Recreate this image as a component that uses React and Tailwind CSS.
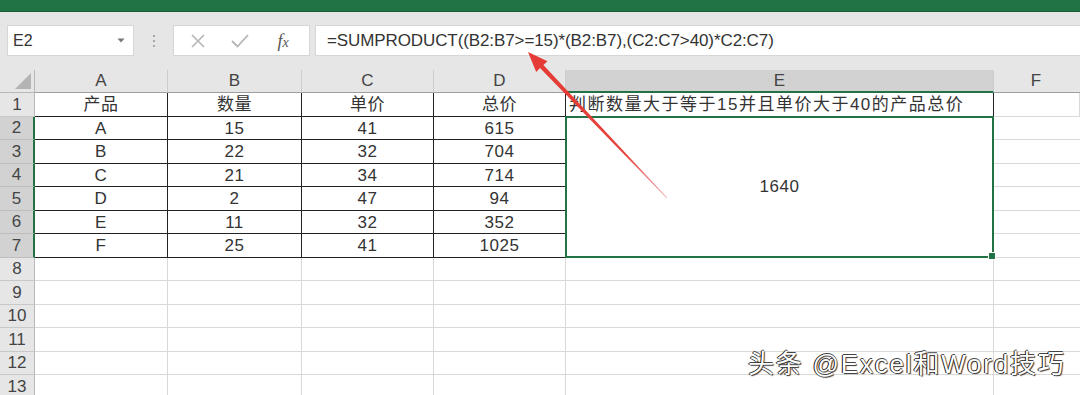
import React from "react";

const FONT = { fontFamily: '"Liberation Sans", "Noto Sans CJK SC", sans-serif' };

const data = [
  ["A", "15", "41", "615"],
  ["B", "22", "32", "704"],
  ["C", "21", "34", "714"],
  ["D", "2", "47", "94"],
  ["E", "11", "32", "352"],
  ["F", "25", "41", "1025"],
];

function RowHead({ n, selected }) {
  return (
    <div
      className={
        "flex items-center justify-center text-[17px] text-[#444] border-b border-[#c8c8c8] " +
        (selected
          ? "bg-[#d2d2d2] border-r-2 border-r-[#217346]"
          : "bg-[#e6e6e6] border-r border-r-[#b8b8b8]")
      }
    >
      {n}
    </div>
  );
}

function TCell({ children }) {
  return (
    <div className="flex items-center justify-center pt-[1px] text-[17px] tracking-[0.5px] text-[#333] border-r border-b border-[#222] bg-white leading-none">
      {children}
    </div>
  );
}

function GCell() {
  return <div className="border-r border-b border-[#d9d9d9] bg-white" />;
}

export default function App() {
  return (
    <div className="relative w-[1080px] h-[395px] overflow-hidden bg-white" style={FONT}>
      {/* ribbon strip */}
      <div className="h-[12px] bg-[#217346] border-b border-[#1a5a37]" />

      {/* formula bar area */}
      <div className="h-[58px] bg-[#e6e6e6] flex items-start pt-[13px] pl-[7px]">
        <div className="w-[127px] h-[31px] bg-white border border-[#d6d6d6] flex items-center justify-between pl-[5px] pr-[8px]">
          <span className="text-[16px] text-[#333]">E2</span>
          <svg width="8" height="5" viewBox="0 0 8 5">
            <path d="M0.5 0.5 L7.5 0.5 L4 4.5 Z" fill="#777" />
          </svg>
        </div>
        <div className="w-[39px] h-[31px] flex items-center justify-center">
          <svg width="4" height="16" viewBox="0 0 4 16">
            <circle cx="2" cy="3" r="1.1" fill="#9a9a9a" />
            <circle cx="2" cy="8" r="1.1" fill="#9a9a9a" />
            <circle cx="2" cy="13" r="1.1" fill="#9a9a9a" />
          </svg>
        </div>
        <div className="w-[137px] h-[31px] bg-white border border-[#d6d6d6] flex items-center">
          <div className="w-[45px] flex justify-center pl-[2px]">
            <svg width="14" height="14" viewBox="0 0 14 14">
              <path d="M1 1 L13 13 M13 1 L1 13" stroke="#b5b5b5" strokeWidth="1.6" />
            </svg>
          </div>
          <div className="w-[42px] flex justify-center">
            <svg width="18" height="14" viewBox="0 0 18 14">
              <path d="M1 7 L6.5 12.5 L17 1" stroke="#b5b5b5" strokeWidth="1.8" fill="none" />
            </svg>
          </div>
          <div className="flex-1 flex justify-center pr-[4px]">
            <span
              className="italic text-[18px] text-[#555] leading-none"
              style={{ fontFamily: '"Liberation Serif", "DejaVu Serif", serif' }}
            >
              f<span className="text-[14px]">x</span>
            </span>
          </div>
        </div>
        <div className="ml-[5px] flex-1 h-[31px] bg-white border border-[#d6d6d6] border-r-0 flex items-center pl-[11px]">
          <span className="text-[17px] text-[#333] whitespace-nowrap tracking-[-0.1px]">
            =SUMPRODUCT((B2:B7&gt;=15)*(B2:B7),(C2:C7&gt;40)*C2:C7)
          </span>
        </div>
      </div>

      {/* sheet grid */}
      <div className="grid grid-cols-[35px_133px_134px_132px_132px_428px_1fr] grid-rows-[23px_repeat(13,23.5px)]">
        {/* header row */}
        <div className="bg-[#e6e6e6] border-r border-b border-[#b8b8b8] relative">
          <svg className="absolute right-[3px] bottom-[3px]" width="16" height="16" viewBox="0 0 16 16">
            <path d="M16 0 L16 16 L0 16 Z" fill="#b4b4b4" />
          </svg>
        </div>
        {["A", "B", "C", "D"].map((c) => (
          <div
            key={c}
            className="bg-[#e6e6e6] border-r border-r-[#cdcdcd] border-b border-b-[#9e9e9e] flex items-center justify-center text-[17px] text-[#444]"
          >
            {c}
          </div>
        ))}
        <div className="bg-[#d2d2d2] border-r border-r-[#cdcdcd] border-b-2 border-b-[#217346] flex items-center justify-center text-[17px] text-[#444]">
          E
        </div>
        <div className="bg-[#e6e6e6] border-b border-b-[#9e9e9e] flex items-center justify-center text-[17px] text-[#444] pr-[2px]">
          F
        </div>

        {/* row 1 */}
        <RowHead n="1" />
        <TCell>产品</TCell>
        <TCell>数量</TCell>
        <TCell>单价</TCell>
        <TCell>总价</TCell>
        <div className="flex items-center pl-[3px] pt-[1px] text-[17px] tracking-[1.5px] text-[#333] border-r border-b border-[#222] bg-white whitespace-nowrap leading-none">
          判断数量大于等于15并且单价大于40的产品总价
        </div>
        <GCell />

        {/* rows 2-7 */}
        {data.map((r, i) => (
          <React.Fragment key={i}>
            <div style={{ gridRow: i + 3, gridColumn: 1 }} className="flex">
              <div className="flex-1 flex items-center justify-center text-[17px] text-[#444] bg-[#d2d2d2] border-b border-[#bdbdbd] border-r-2 border-r-[#217346]">
                {i + 2}
              </div>
            </div>
            {r.map((v, j) => (
              <div key={j} style={{ gridRow: i + 3, gridColumn: j + 2 }} className="flex">
                <div className="flex-1 flex items-center justify-center pt-[1px] text-[17px] tracking-[0.5px] text-[#333] border-r border-b border-[#222] bg-white leading-none">
                  {v}
                </div>
              </div>
            ))}
            <div style={{ gridRow: i + 3, gridColumn: 7 }} className="border-b border-[#d9d9d9] bg-white" />
          </React.Fragment>
        ))}
        <div
          style={{ gridRow: "3 / span 6", gridColumn: 6 }}
          className="relative -mt-px -ml-px border-2 border-[#217346] bg-white flex items-center justify-center text-[17px] tracking-[0.5px] text-[#333]"
        >
          <span>1640</span>
          <div className="absolute -right-[4px] -bottom-[4px] w-[6px] h-[6px] bg-[#217346] border border-white box-content" />
        </div>

        {/* rows 8-13 */}
        {[8, 9, 10, 11, 12, 13].map((n) => (
          <React.Fragment key={n}>
            <RowHead n={String(n)} />
            <GCell />
            <GCell />
            <GCell />
            <GCell />
            <GCell />
            <div className="border-b border-[#d9d9d9] bg-white" />
          </React.Fragment>
        ))}
      </div>

      {/* red arrow annotation */}
      <svg className="absolute left-0 top-0 pointer-events-none" width="1080" height="395" viewBox="0 0 1080 395">
        <defs>
          <linearGradient id="fade" x1="528" y1="52" x2="667" y2="198" gradientUnits="userSpaceOnUse">
            <stop offset="0" stopColor="#e53a35" stopOpacity="1" />
            <stop offset="0.7" stopColor="#e53a35" stopOpacity="0.95" />
            <stop offset="1" stopColor="#e8606a" stopOpacity="0.55" />
          </linearGradient>
        </defs>
        <polygon
          points="528,52 547.5,61.2 543.4,65 667.3,197.7 666.7,198.3 540,68 536.2,72"
          fill="url(#fade)"
        />
      </svg>

      {/* watermark */}
      <div
        className="absolute left-[748px] top-[351px] text-[26px] leading-none tracking-[1.8px] text-white whitespace-nowrap [text-shadow:-1px_0_0_#111,1px_1px_1px_#333,0_-1px_0_#444]"
        style={{ fontFamily: '"Liberation Sans", "Noto Sans CJK SC", sans-serif' }}
      >
        头条 @Excel和Word技巧
      </div>
    </div>
  );
}
